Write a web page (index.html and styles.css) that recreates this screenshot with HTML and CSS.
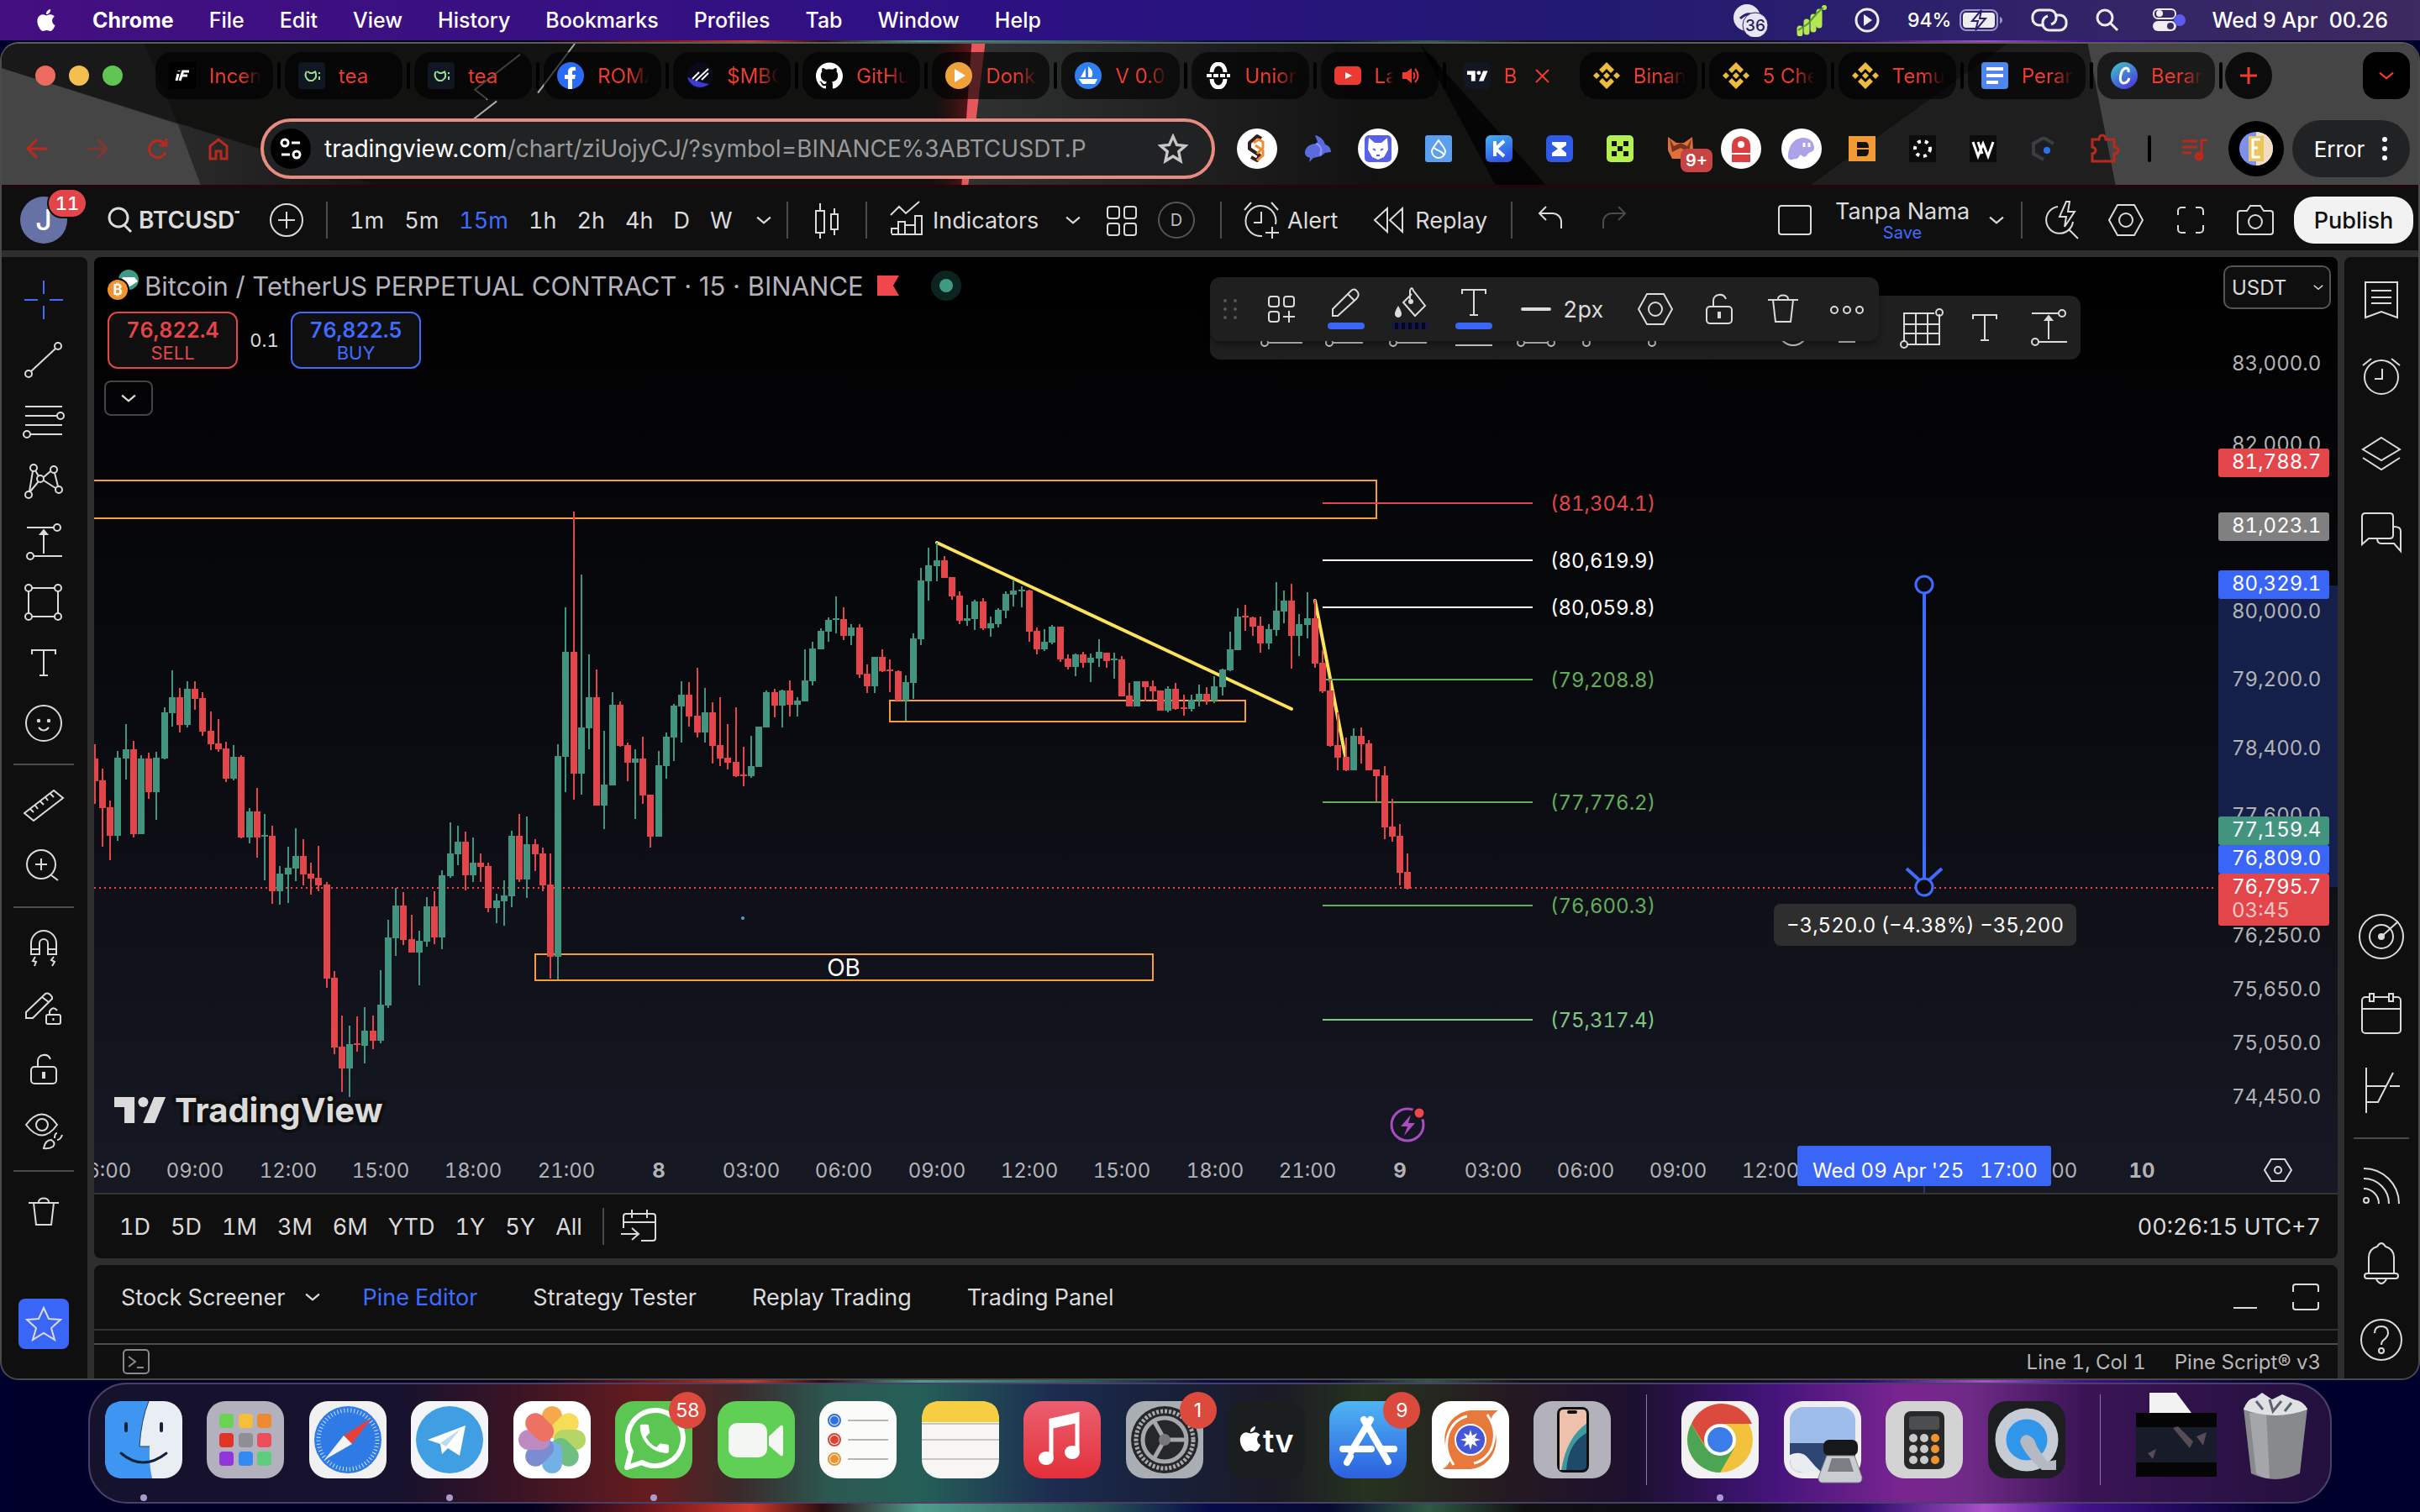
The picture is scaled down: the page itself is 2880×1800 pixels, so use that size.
FILE: index.html
```html
<!DOCTYPE html>
<html lang="en">
<head>
  <meta charset="utf-8">
  <title>BTCUSDT.P 15m - TradingView</title>
  <link rel="stylesheet" href="styles.css">
</head>
<body>

<svg class="sprite" aria-hidden="true">
  <symbol id="apple" viewBox="0 0 24 24"><path fill="currentColor" d="M12.152 6.896c-.948 0-2.415-1.078-3.96-1.04-2.04.027-3.91 1.183-4.961 3.014-2.117 3.675-.546 9.103 1.519 12.09 1.013 1.454 2.208 3.09 3.792 3.039 1.52-.065 2.09-.987 3.935-.987 1.831 0 2.35.987 3.96.948 1.637-.026 2.676-1.48 3.676-2.948 1.156-1.688 1.636-3.325 1.662-3.415-.039-.013-3.182-1.221-3.22-4.857-.026-3.04 2.48-4.494 2.597-4.559-1.429-2.09-3.623-2.324-4.39-2.376-2-.156-3.675 1.09-4.61 1.09zM15.53 3.83c.843-1.012 1.4-2.427 1.245-3.83-1.207.052-2.662.805-3.532 1.818-.78.896-1.454 2.338-1.273 3.714 1.338.104 2.715-.688 3.559-1.701"/></symbol>
  <symbol id="chev" viewBox="0 0 16 16"><path fill="none" stroke="currentColor" stroke-width="2" d="M1 5l7 6 7-6"/></symbol>
  <symbol id="binance" viewBox="0 0 32 32"><path fill="#edbc3f" d="M16 0l9 9-4 4-5-5-5 5-4-4zM16 32l9-9-4-4-5 5-5-5-4 4zM4 12l4 4-4 4-4-4zM28 12l4 4-4 4-4-4zM16 12l4 4-4 4-4-4z"/></symbol>
  <symbol id="tea" viewBox="0 0 32 32"><rect width="32" height="32" rx="4" fill="#101722"/><g fill="none" stroke="#9ade8e" stroke-width="2"><path d="M10 11c-3 4-1 9 3 11h4c5-3 5-7 3-11M11 11l3 2h3l4-2"/><path d="M25 12v2M25 17v4"/></g></symbol>
  <symbol id="hex" viewBox="0 0 28 28"><path d="M9 5h10l5 9-5 9H9l-5-9z"/><circle cx="14" cy="14" r="4"/></symbol>
  <symbol id="ttool" viewBox="0 0 28 28"><path d="M7 9V6.500h14V9M14 6.500v15M11.500 21.500h5"/></symbol>
  <symbol id="trash" viewBox="0 0 28 28"><path d="M5 8.500h18M8 8.500l1.500 13h9l1.500-13M11 8c0-3 6-3 6 0"/></symbol>
  <symbol id="unlock" viewBox="0 0 28 28"><rect x="6.500" y="12.500" width="15" height="10" rx="2"/><path d="M10.500 12V9c0-4 6-5 7.500-1"/><rect x="13.500" y="16" width="1" height="3"/></symbol>
  <symbol id="fib" viewBox="0 0 28 28"><path d="M3 5.500h22M3 11h19M3 16.500h22M6 22h19"/><circle cx="24" cy="11" r="2"/><circle cx="4" cy="22" r="2"/></symbol>
  <symbol id="longpos" viewBox="0 0 28 28"><path d="M4 5.500h16M8 22.500h17M14 21V9"/><path d="M12 9.500l2-2.500 2 2.500z" fill="currentColor"/><circle cx="22" cy="5.500" r="2"/><circle cx="6" cy="22.500" r="2"/></symbol>
  <symbol id="full" viewBox="0 0 28 28"><path d="M6.500 11V8.500a2 2 0 0 1 2-2H11M17 6.500h2.500a2 2 0 0 1 2 2V11M21.500 17v2.500a2 2 0 0 1-2 2H17M11 21.500H8.500a2 2 0 0 1-2-2V17"/></symbol>
  <symbol id="alarm" viewBox="0 0 28 28"><circle cx="14" cy="14" r="10"/><path d="M14.500 9v6H10M3 7l5-4M25 7l-5-4"/></symbol>
  <symbol id="tvmark" viewBox="0 0 36 18"><path fill="currentColor" d="M0 0h14v18H7V7H0zM28 18h-8l7.500-18h8z"/><circle cx="20" cy="3.500" r="3.500" fill="currentColor"/></symbol>
</svg>

<header class="menubar">
  <nav class="menus">
    <svg class="apple"><use href="#apple"/></svg>
    <b>Chrome</b><span>File</span><span>Edit</span><span>View</span><span>History</span><span>Bookmarks</span><span>Profiles</span><span>Tab</span><span>Window</span><span>Help</span>
  </nav>
  <div class="status">
    <svg width="42" height="40" viewBox="0 0 42 40"><circle cx="16" cy="17" r="16" fill="#e8e6f2"/><path d="M8 18q8-8 16-4" stroke="#2a2070" stroke-width="3" fill="none"/><circle cx="26" cy="26" r="15" fill="#e8e6f2" stroke="#2a2070"/><text x="26" y="33" font-size="19" text-anchor="middle" fill="#241c60">36</text></svg>
    <svg class="gap-l" width="36" height="38" viewBox="0 0 36 38"><path d="M4 35v-6M12 33V21M20 30V15M27 25V9" stroke="#b5e853" stroke-width="7" stroke-linecap="round"/><circle cx="33" cy="4" r="3" fill="#b5e853"/><path d="M2 31l12-8 10-12 8-7" stroke="#4f9a31" stroke-width="2" fill="none"/></svg>
    <svg class="gap-l" width="30" height="30" viewBox="0 0 30 30"><circle cx="15" cy="15" r="13" fill="none" stroke="#eee" stroke-width="3"/><path d="M11 8l10 7-10 7z" fill="#eee"/></svg>
    <span class="battery gap-l">94%</span>
    <svg class="gap-s" width="52" height="26" viewBox="0 0 52 26"><rect x="1" y="1" width="44" height="24" rx="7" fill="none" stroke="#9d95cf" stroke-width="2"/><rect x="4" y="4" width="38" height="18" rx="4" fill="#eee"/><path d="M48 9v8q3-1 3-4t-3-4z" fill="#9d95cf"/><path d="M26 1l-11 13h7l-3 11 12-14h-7z" fill="#eee" stroke="#2a2070" stroke-width="2"/></svg>
    <svg class="gap-l" width="44" height="28" viewBox="0 0 44 28" fill="none" stroke="#eee" stroke-width="3"><path d="M16 20h-6a8 8 0 0 1-8-9 8 8 0 0 1 8-9h12a8 8 0 0 1 8 9q0 6-6 8"/><path d="M28 8h6a8 8 0 0 1 8 9 8 8 0 0 1-8 9H22a8 8 0 0 1-8-9q0-6 6-8"/></svg>
    <svg class="gap-l" width="28" height="28" viewBox="0 0 28 28" fill="none" stroke="#eee" stroke-width="3"><circle cx="11" cy="11" r="9"/><path d="M18 18l8 8"/></svg>
    <svg class="gap-xl" width="40" height="28" viewBox="0 0 40 28"><rect x="1" y="1" width="26" height="11" rx="5" fill="none" stroke="#eee" stroke-width="2"/><circle cx="8" cy="6" r="4" fill="#eee"/><rect x="0" y="15" width="28" height="12" rx="6" fill="#eee"/><circle cx="21" cy="21" r="4" fill="#332a68"/><circle cx="32" cy="14" r="7" fill="#5b5bf0"/></svg>
    <span class="clock">Wed 9 Apr&nbsp; 00.26</span>
  </div>
</header>

<main class="browser">
  <div class="chrome">
    <svg class="theme" viewBox="0 0 2880 172" preserveAspectRatio="none" aria-hidden="true">
      <defs>
        <linearGradient id="gMid"><stop offset="0" stop-color="#303131"/><stop offset="1" stop-color="#111"/></linearGradient>
        <linearGradient id="gRed"><stop offset="0" stop-color="#5a0d10" stop-opacity="0"/><stop offset="1" stop-color="#8c1a1e" stop-opacity="0.800"/></linearGradient>
        <linearGradient id="gFade"><stop offset="0" stop-color="#3c3c3c"/><stop offset="1" stop-color="#161616"/></linearGradient>
      </defs>
      <rect width="2880" height="172" fill="#121211"/>
      <path d="M0 0h170l40 98L0 30z" fill="#191919"/>
      <path d="M0 30l446 142H0z" fill="url(#gFade)"/>
      <path d="M0 30l210 68 27 74H0z" fill="#454545"/>
      <path d="M1165 0h420l60 172h-494z" fill="url(#gMid)"/>
      <path d="M1112 0h53l-14 172h-40z" fill="url(#gRed)"/>
      <path d="M1156 0h16l-20 172h-8z" fill="#e4585c"/>
      <path d="M1690 0l150 172h-60z" fill="#050505"/>
      <path d="M2390 0h96l33 172h-363z" fill="#1e1e1e"/>
      <path d="M2486 0h394v172h-361z" fill="#454545"/>
      <path d="M683 0l-44 60M618 13l-54 43 15 12M590 70l-30 24" stroke="#aaa" stroke-width="2" fill="none"/>
    </svg>

    <div class="tabstrip">
      <div class="lights"><i class="red"></i><i class="amber"></i><i class="green"></i></div>
      <div class="tabs">
        <a class="tab" href="#"><svg class="fav" viewBox="0 0 32 32"><rect width="32" height="32" fill="#000"/><path d="M16 11h8M14 16h8M17 10l-4 12M11 14l-2 8M12 10v1" stroke="#fff" stroke-width="3" fill="none"/></svg><span>Incen</span></a>
        <a class="tab" href="#"><svg class="fav"><use href="#tea"/></svg><span>tea</span></a>
        <a class="tab" href="#"><svg class="fav"><use href="#tea"/></svg><span>tea</span></a>
        <a class="tab" href="#"><svg class="fav" viewBox="0 0 32 32"><circle cx="16" cy="16" r="16" fill="#2a6cf6"/><path d="M13 32V20H9v-5h4v-3c0-5 3-7 9-6v4c-3 0-4 0-4 2v3h4l-1 5h-3v12z" fill="#fff"/></svg><span>ROMA</span></a>
        <a class="tab" href="#"><svg class="fav" viewBox="0 0 32 32"><circle cx="16" cy="16" r="16" fill="#0a0a18"/><path d="M1 18c5 2 14 6 26 8A16 16 0 0 1 1 18z" fill="#3b3bd8"/><path d="M7 20l8-8M11 22L26 8M18 21l8-8" stroke="#fff" stroke-width="2"/></svg><span>$MBG</span></a>
        <a class="tab" href="#"><svg class="fav" viewBox="0 0 24 24"><path fill="#fff" d="M12 .297c-6.630 0-12 5.373-12 12 0 5.303 3.438 9.800 8.205 11.385.6.113.820-.258.820-.577 0-.285-.010-1.040-.015-2.040-3.338.724-4.042-1.610-4.042-1.610C4.422 18.070 3.633 17.700 3.633 17.700c-1.087-.744.084-.729.084-.729 1.205.084 1.838 1.236 1.838 1.236 1.070 1.835 2.809 1.305 3.495.998.108-.776.417-1.305.760-1.605-2.665-.3-5.466-1.332-5.466-5.930 0-1.310.465-2.380 1.235-3.220-.135-.303-.540-1.523.105-3.176 0 0 1.005-.322 3.300 1.230.960-.267 1.980-.399 3-.405 1.020.006 2.040.138 3 .405 2.280-1.552 3.285-1.230 3.285-1.230.645 1.653.240 2.873.120 3.176.765.840 1.230 1.910 1.230 3.220 0 4.610-2.805 5.625-5.475 5.920.420.360.810 1.096.810 2.220 0 1.606-.015 2.896-.015 3.286 0 .315.210.690.825.570C20.565 22.092 24 17.592 24 12.297c0-6.627-5.373-12-12-12"/></svg><span>GitHub</span></a>
        <a class="tab" href="#"><svg class="fav" viewBox="0 0 32 32"><circle cx="16" cy="16" r="16" fill="#f0a23a"/><path d="M11 8l13 8-13 8z" fill="#fff"/></svg><span>Donk</span></a>
        <a class="tab" href="#"><svg class="fav" viewBox="0 0 32 32"><circle cx="16" cy="16" r="16" fill="#2f7ff0"/><path d="M13 7v11H7zM16 5q8 6 4 13h-4zM5 20h22l-3 6H9z" fill="#fff"/></svg><span>V 0.0</span></a>
        <a class="tab" href="#"><svg class="fav" viewBox="0 0 32 32"><path d="M8 12a8 10 0 0 1 16 0M8 20a8 10 0 0 0 16 0" stroke="#fff" stroke-width="5" fill="none"/><path d="M2 16h28" stroke="#fff" stroke-width="4" stroke-dasharray="6 2"/></svg><span>Union</span></a>
        <a class="tab" href="#"><svg class="fav" viewBox="0 0 32 32"><rect y="5" width="32" height="22" rx="5" fill="#ec3a32"/><path d="M13 12l8 4-8 4z" fill="#fff"/></svg><span class="short">La</span><svg class="mark" viewBox="0 0 24 24" fill="none" stroke="currentColor" stroke-width="2"><path d="M2 9h4l5-4v14l-5-4H2z" fill="currentColor"/><path d="M14 8q3 4 0 8M16 4q7 8 0 16"/></svg></a>
        <a class="tab active" href="#"><svg class="fav" viewBox="0 0 32 32"><rect width="32" height="32" rx="5" fill="#131722"/><svg x="4" y="10" width="25" height="13" viewBox="0 0 36 18" color="#fff"><use href="#tvmark"/></svg></svg><span class="short">B</span><svg class="mark" viewBox="0 0 24 24" stroke="currentColor" stroke-width="2"><path d="M4 5l15 15M19 5L4 20"/></svg></a>
        <a class="tab" href="#"><svg class="fav"><use href="#binance"/></svg><span>Binan</span></a>
        <a class="tab" href="#"><svg class="fav"><use href="#binance"/></svg><span>5 Che</span></a>
        <a class="tab" href="#"><svg class="fav"><use href="#binance"/></svg><span>Temu</span></a>
        <a class="tab" href="#"><svg class="fav" viewBox="0 0 32 32"><rect width="32" height="32" rx="4" fill="#4f86ec"/><path d="M6 8h20M6 16h20M6 24h14" stroke="#fff" stroke-width="4"/></svg><span>Peran</span></a>
        <a class="tab" href="#"><svg class="fav" viewBox="0 0 32 32"><defs><linearGradient id="cv" x2="0.600" y2="1"><stop stop-color="#3ecbc3"/><stop offset="1" stop-color="#4a3fe0"/></linearGradient></defs><circle cx="16" cy="16" r="16" fill="url(#cv)"/><path d="M21 12q1-5-3-5c-6 1-10 17-3 18q5 0 7-6" stroke="#fff" stroke-width="3" fill="none"/></svg><span>Beran</span></a>
      </div>
      <button class="newtab" aria-label="New tab"><svg width="24" height="24" viewBox="0 0 24 24" stroke="currentColor" stroke-width="3"><path d="M12 2v20M2 12h20"/></svg></button>
      <button class="tabsearch" aria-label="Search tabs"><svg width="18" height="18"><use href="#chev"/></svg></button>
    </div>

    <div class="navbar">
      <div class="navbtns">
        <svg viewBox="0 0 28 28"><path d="M26 14H4M14 3L3 14l11 11"/></svg>
        <svg viewBox="0 0 28 28" class="dim"><path d="M2 14h22M14 3l11 11-11 11"/></svg>
        <svg viewBox="0 0 28 28"><path d="M23 18a10 10 0 1 1-1-9M24 2v8h-8"/></svg>
        <svg viewBox="0 0 28 28"><path d="M4 26V11l10-8 10 8v15h-7v-9h-6v9z"/></svg>
      </div>
      <div class="omnibox">
        <svg class="tune" viewBox="0 0 48 48"><circle cx="24" cy="24" r="24" fill="#000"/><g stroke="#fff" stroke-width="3" fill="none"><circle cx="17" cy="17" r="4"/><path d="M25 17h10M13 31h10"/><circle cx="31" cy="31" r="4"/></g></svg>
        <p class="url"><b>tradingview.com</b>/chart/ziUojyCJ/?symbol=BINANCE%3ABTCUSDT.P</p>
        <svg class="star" viewBox="0 0 32 32"><path d="M16 3l4 9 9 1-7 6 2 10-8-5-8 5 2-10-7-6 9-1z" fill="none" stroke="#c7c7c7" stroke-width="3"/></svg>
      </div>
      <div class="exts">
        <svg viewBox="0 0 48 48"><circle cx="24" cy="24" r="24" fill="#fff"/><path d="M29 12l-5-3-9 8v7l12 8-3 6-7-4" stroke="#33201c" stroke-width="4" fill="none" stroke-linejoin="round"/><path d="M20 17l6-4 5 3v7l-7 7M22 20l9 6v6l-7 6" stroke="#ef8c32" stroke-width="3" fill="none" stroke-linejoin="round"/></svg>
        <svg viewBox="0 0 48 48"><path d="M9 29c0-6 5-11 13-11l2-2-3-8c6 1 11 6 12 11 4 1 7 4 7 9l-7 1-5 4-9 2-5 5 1-5c-4-1-6-3-6-6z" fill="#5c6bdc"/><path d="M22 18c6 2 8 8 5 14" stroke="#8b97f5" stroke-width="2" fill="none"/></svg>
        <svg viewBox="0 0 48 48"><circle cx="24" cy="24" r="24" fill="#fff"/><rect x="8" y="8" width="32" height="32" rx="5" fill="#5a5fe8"/><path d="M13 11l7 6h8l7-6 1 14-5 9-7 3-7-3-5-9z" fill="#fff"/><path d="M18 24l3 2M30 24l-3 2M22 32h4" stroke="#5a5fe8" stroke-width="2"/></svg>
        <svg viewBox="0 0 48 48"><rect x="8" y="8" width="32" height="32" rx="3" fill="#5aa0ee"/><path d="M24 14c5 7 8 10 8 13a8 8 0 0 1-16 0c0-3 3-6 8-13zM19 23c3 4 9 3 11 8" fill="none" stroke="#fff" stroke-width="2"/></svg>
        <svg viewBox="0 0 48 48"><defs><linearGradient id="kp" x2="0.400" y2="1"><stop stop-color="#44b3f0"/><stop offset="1" stop-color="#2f57e8"/></linearGradient></defs><rect x="8" y="8" width="32" height="32" rx="6" fill="url(#kp)"/><path d="M19 15v18M30 15l-10 9 10 9" stroke="#fff" stroke-width="4" fill="none"/></svg>
        <svg viewBox="0 0 48 48"><rect x="8" y="8" width="32" height="32" rx="6" fill="#2d5be6"/><path d="M15 16h17v4l-6 4 6 5v4H15v-4l7-5-7-5z" fill="#fff"/></svg>
        <svg viewBox="0 0 48 48"><rect x="8" y="8" width="32" height="32" rx="5" fill="#b4f04e"/><path d="M14 15h6v6h-6zM28 15h6v6h-6zM21 21h6v6h-6zM14 27h6v6h-6zM28 27h6v6h-6z" fill="#111"/></svg>
        <span class="badged"><svg viewBox="0 0 48 48"><path d="M9 10l10 7h9l10-7 1 16-6 10H14L9 26z" fill="#e0703a"/><path d="M11 12l5 9 8-4 8 4 5-9-3 16-10-5-10 5z" fill="#7a3320"/></svg><i>9+</i></span>
        <svg viewBox="0 0 48 48"><circle cx="24" cy="24" r="24" fill="#fff"/><path d="M13 40V20q0-9 11-11 11 2 11 11v20z" fill="#dc3f42"/><circle cx="24" cy="19" r="4" fill="#fff"/><path d="M12 30h24" stroke="#fff" stroke-width="2"/></svg>
        <svg viewBox="0 0 48 48"><circle cx="24" cy="24" r="24" fill="#fff"/><path d="M8 34c0-14 8-23 18-23 8 0 13 5 13 12 0 6-6 4-8 8-3 5-6 2-8 0-3 3-3 6-8 5-2 2-7 2-7-2z" fill="#aba2e8"/><path d="M27 17v5M33 17v5" stroke="#fff" stroke-width="3"/></svg>
        <svg viewBox="0 0 48 48"><rect x="8" y="9" width="32" height="30" fill="#f29a33"/><path d="M18 16h10q4 0 4 7H18zM18 25h14q0 8-4 8H18z" fill="#111"/></svg>
        <svg viewBox="0 0 48 48"><rect x="8" y="8" width="32" height="32" fill="#0b0b0b"/><circle cx="24" cy="24" r="9" fill="none" stroke="#fff" stroke-width="4" stroke-dasharray="4 5"/></svg>
        <svg viewBox="0 0 48 48"><rect x="8" y="8" width="32" height="32" fill="#0b0b0b"/><path d="M12 16l6 17 6-15 6 15 6-17M18 16l5 14" fill="none" stroke="#fff" stroke-width="3"/></svg>
        <svg viewBox="0 0 48 48"><path d="M24 11l-12 7v12l12 7M24 11l12 7" fill="none" stroke="#3a3e44" stroke-width="4"/><circle cx="28" cy="26" r="4" fill="#2a72f0"/></svg>
        <svg viewBox="0 0 48 48"><path d="M10 13h8q0-5 4-5t4 5h10v9q5 0 5 4t-5 4v9H10v-9q4-1 4-4t-4-4z" fill="none" stroke="#b92a1e" stroke-width="3"/></svg>
      </div>
      <i class="navsep"></i>
      <svg class="music" viewBox="0 0 32 32" fill="none" stroke="#b92a1e" stroke-width="3"><path d="M1 7h18M1 14h18M1 21h11M24 25V6h7"/><circle cx="21" cy="25" r="4" fill="#b92a1e"/></svg>
      <svg class="profile" viewBox="0 0 66 66"><circle cx="33" cy="33" r="33" fill="#000"/><circle cx="33" cy="33" r="20" fill="#7d90ec"/><path d="M33 13a20 20 0 0 1 0 40z" fill="#f4dcc0"/><path d="M24 18h18v30H24z" fill="#e9c65e"/><path d="M38 22h-9v21h9M29 32h6" fill="none" stroke="#fff" stroke-width="3"/></svg>
      <button class="error">Error<svg width="8" height="32" viewBox="0 0 8 32"><g fill="#fff"><circle cx="4" cy="5" r="3"/><circle cx="4" cy="16" r="3"/><circle cx="4" cy="27" r="3"/></g></svg></button>
    </div>
  </div>

  <div class="tv">
    <div class="topbar">
      <div class="group symbol">
        <span class="avatar">J<i>11</i></span>
        <svg class="glass" width="32" height="32" viewBox="0 0 32 32" fill="none" stroke="currentColor" stroke-width="3"><circle cx="14" cy="13" r="11"/><path d="M21 22l8 8"/></svg>
        <b>BTCUSDT.P</b>
        <svg class="ic" viewBox="0 0 28 28"><circle cx="14" cy="14" r="9.500"/><path d="M14 9v10M9 14h10"/></svg>
      </div>
      <div class="group intervals">
        <button>1m</button><button>5m</button><button class="on">15m</button><button>1h</button><button>2h</button><button>4h</button><button>D</button><button>W</button>
        <svg class="chev"><use href="#chev"/></svg>
      </div>
      <div class="group style">
        <svg class="ic" viewBox="0 0 28 28"><path d="M7.500 8.500h5v13h-5zM10 4v4M10 22v3M16.500 10.500h4v9h-4zM18.500 7v3M18.500 20v3"/></svg>
      </div>
      <div class="group indi">
        <svg class="ic" viewBox="0 0 28 28"><path d="M5.500 22.500h18v-11h-4v11M9.500 22v-7h4v7M5.500 22v-3h4M13.500 17h6M5 11l5-5 4 4 8-7"/></svg>
        <button class="label">Indicators</button>
        <svg class="chev"><use href="#chev"/></svg>
        <svg class="ic" viewBox="0 0 28 28"><rect x="6" y="6" width="7" height="7" rx="1.500"/><rect x="16" y="6" width="7" height="7" rx="1.500"/><rect x="6" y="16" width="7" height="7" rx="1.500"/><rect x="16" y="16" width="7" height="7" rx="1.500"/></svg>
        <span class="dcircle">D</span>
      </div>
      <div class="group alert">
        <svg class="ic" viewBox="0 0 28 28"><path d="M15 23.500a9 9 0 1 1 8-7M14.500 9v6.500H10M4.500 8l4-4.500M24.500 8l-4-4.500M21 18v7M17 21.500h8"/></svg>
        <button class="label">Alert</button>
        <svg class="ic replay" viewBox="0 0 28 28"><path d="M13.500 7v14L6 14zM22.500 7v14L15 14z"/></svg>
        <button class="label">Replay</button>
      </div>
      <div class="group undo">
        <svg class="ic" viewBox="0 0 28 28"><path d="M11 6l-4 4 4 4M7.500 10H15a5 5 0 0 1 5 5v4"/></svg>
        <svg class="ic off" viewBox="0 0 28 28"><path d="M17 6l4 4-4 4M20.500 10H13a5 5 0 0 0-5 5v4"/></svg>
      </div>
      <div class="group layout">
        <svg class="ic" viewBox="0 0 28 28"><rect x="4.500" y="5.500" width="19" height="17" rx="1.500"/></svg>
        <p class="name">Tanpa Nama<a href="#">Save</a></p>
        <svg class="chev"><use href="#chev"/></svg>
      </div>
      <div class="group right">
        <svg class="ic" viewBox="0 0 28 28"><path d="M12 6a8 8 0 1 0 9 9M19 20l5 5M17 3l-4 9h4l-1 6 6-9h-4l1-6z"/></svg>
        <svg class="ic"><use href="#hex"/></svg>
        <svg class="ic"><use href="#full"/></svg>
        <svg class="ic" viewBox="0 0 28 28"><path d="M5 8.500h4l2-3h6l2 3h4q1.500 0 1.500 1.500v11q0 1.500-1.500 1.500H5q-1.500 0-1.500-1.500V10q0-1.500 1.500-1.500z"/><circle cx="14" cy="15" r="4"/></svg>
        <button class="publish">Publish</button>
      </div>
    </div>

    <div class="work">
      <aside class="tools">
        <svg class="ic blue" viewBox="0 0 28 28"><path d="M14 2.500v8M14 17.500v8M2.500 14h8M17.500 14h8"/></svg>
        <svg class="ic" viewBox="0 0 28 28"><circle cx="5" cy="22" r="2"/><circle cx="22.500" cy="5.500" r="2"/><path d="M6.500 20.500L21 7"/></svg>
        <svg class="ic"><use href="#fib"/></svg>
        <svg class="ic" viewBox="0 0 28 28"><circle cx="8" cy="6" r="2"/><circle cx="20" cy="7" r="2"/><circle cx="12" cy="12.500" r="2"/><circle cx="5" cy="22" r="2"/><circle cx="23" cy="19" r="2"/><path d="M7.500 8L5.500 20M9 7.500l2 3.500M14 11.500L18 8M6 20l5-6M14 13.500l7 4.500M20.500 9l2 8"/></svg>
        <svg class="ic"><use href="#longpos"/></svg>
        <svg class="ic" viewBox="0 0 28 28"><circle cx="5" cy="5.500" r="2"/><circle cx="22.500" cy="5.500" r="2"/><circle cx="5" cy="22.500" r="2"/><circle cx="22.500" cy="22.500" r="2"/><path d="M7 5.500h13.500M7 22.500h13.500M5 7.500v13M22.500 7.500v13"/></svg>
        <svg class="ic"><use href="#ttool"/></svg>
        <svg class="ic" viewBox="0 0 28 28"><circle cx="14" cy="14" r="10.500"/><path d="M11 16.500q3 3.500 6 0"/><circle cx="11" cy="12.500" r="0.600"/><circle cx="17" cy="12.500" r="0.600"/></svg>
        <hr>
        <svg class="ic" viewBox="0 0 28 28"><path d="M2.500 18.500L20 5l5.500 4.500L8 23zM6 16l2 2M9 14l1.500 2M12 11.500l2 2M15 9l1.500 2M18 7l2 2"/></svg>
        <svg class="ic" viewBox="0 0 28 28"><circle cx="12.500" cy="13" r="8.500"/><path d="M12.500 9.500v7M9 13h7M18.500 19.500l4 3"/></svg>
        <hr>
        <svg class="ic" viewBox="0 0 28 28"><path d="M6.500 17.500V11a7.500 7.500 0 0 1 15 0v6.500h-5V11a2.500 2.500 0 0 0-5 0v6.500zM6.500 14.500h5M16.500 14.500h5M9 19l-1.500 2.500 2 .500-1 2.500M20 19l-1.500 2 2 1-1.500 2.500"/></svg>
        <svg class="ic" viewBox="0 0 28 28"><path d="M3.500 19.500V16L15 5q2-1 4 2v1L7.500 19.500zM13 7l4 3"/><rect x="15.500" y="17.500" width="8.500" height="5.500" rx="1"/><path d="M17.500 17v-1.500q2-3.500 4.500-.5M19.700 19.500v1.500"/></svg>
        <svg class="ic"><use href="#unlock"/></svg>
        <svg class="ic" viewBox="0 0 28 28"><path d="M3.500 11q9.500-12.500 18.500 0-9 12.500-18.500 0z"/><circle cx="13" cy="11" r="3.500"/><path d="M14 25q1-5 4.500-5 3 2 1 4-2 1.500-5.500 1zM20.500 19q0-3 1.500-3M22 20q2 0 3-3"/></svg>
        <hr>
        <svg class="ic"><use href="#trash"/></svg>
        <button class="fave" aria-label="Favorites"><svg class="ic" viewBox="0 0 28 28"><path d="M14 4.500l3 6.500 7 .500-5.500 5 2 7-6.500-4-6.500 4 2-7L4 11.500l7-.500z"/></svg></button>
      </aside>

      <div class="center">
        <section class="chart">
          <div class="plot">
            <svg class="canvas" viewBox="112 306 2670 1114">
              <g id="shapes">
                <rect class="band" x="2640" y="697" width="142" height="359"/>
                <path class="zone" d="M100 572H1638V617H100z"/>
                <path class="zone" d="M1059 834H1482V859H1059z"/>
                <path class="zone" d="M637 1136H1372V1167H637z"/>
                <text class="ob" x="1004" y="1162">OB</text>
                <circle cx="884" cy="1093" r="2" fill="#4fa3c7"/>
                <path class="trend" d="M1115 646L1537 844M1565 715L1601 900"/>
              </g>
              <g id="levels"></g>
              <path class="last" d="M112 1057H2634"/>
              <g id="candles"></g>
              <g class="measure">
                <path d="M2290 706V1046M2269 1034l21 19 21-19"/>
                <circle cx="2290" cy="696" r="10"/><circle cx="2290" cy="1056" r="10"/>
              </g>
              <g class="tip"><rect x="2111" y="1076" width="360" height="50" rx="8"/><text x="2291" y="1110">−3,520.0 (−4.38%) −35,200</text></g>
              <g class="event"><circle cx="1675" cy="1339" r="19"/><path d="M1679 1327l-12 14h8l-4 11 13-15h-8z"/></g>
              <circle cx="1689" cy="1325" r="7" fill="#f0464c" stroke="#14161f" stroke-width="3"/>
              <g class="brand"><svg x="136" y="1306" width="62" height="31" viewBox="0 0 36 18"><use href="#tvmark"/></svg><text x="208" y="1336">TradingView</text></g>
              <g id="axes"></g>
              <path d="M2290 1412v8" stroke="#26356e" stroke-width="2"/>
              <g class="axisicon"><path d="M2703 1380h16l8 13-8 13h-16l-8-13z"/><circle cx="2711" cy="1393" r="4"/></g>
            </svg>
            <div class="legend">
              <h1><svg width="38" height="38" viewBox="0 0 38 38"><circle cx="25" cy="12" r="12" fill="#3f9a86"/><path d="M18 9h14l4 5-11 7-9-8z" fill="#fff"/><circle cx="12" cy="24" r="14" fill="#000"/><circle cx="12" cy="24" r="12" fill="#f0932f"/><text x="12" y="30" font-size="17" font-weight="700" text-anchor="middle" fill="#fff">₿</text></svg><span>Bitcoin / TetherUS PERPETUAL CONTRACT · 15 · BINANCE</span><svg class="flag" width="26" height="24" viewBox="0 0 26 24"><path d="M0 0h26l-7 12 7 12H0z" fill="#f0464c"/></svg><svg width="36" height="36" viewBox="0 0 36 36"><circle cx="18" cy="18" r="18" fill="#0b2420"/><circle cx="18" cy="18" r="8" fill="#3f9a84"/></svg></h1>
              <div class="trade">
                <button class="sell"><b>76,822.4</b>SELL</button>
                <span>0.1</span>
                <button class="buy"><b>76,822.5</b>BUY</button>
              </div>
              <button class="fold" aria-label="Collapse"><svg width="18" height="18"><use href="#chev"/></svg></button>
            </div>
            <label class="currency"><select aria-label="Currency"><option>USDT</option></select><svg width="12" height="12"><use href="#chev"/></svg></label>

            <div class="floating back">
              <svg class="ic" viewBox="0 0 28 28"><path d="M6 23h20"/><circle cx="3.500" cy="23" r="2"/></svg>
              <svg class="ic" viewBox="0 0 28 28"><path d="M6 23h18"/><circle cx="4" cy="23" r="2"/></svg>
              <svg class="ic" viewBox="0 0 28 28"><path d="M6 23h18"/><circle cx="4" cy="23" r="2"/></svg>
              <svg class="ic" viewBox="0 0 28 28"><path d="M3 24.500h22"/></svg>
              <svg class="ic" viewBox="0 0 28 28"><path d="M6 23h14"/><circle cx="4" cy="23" r="2"/><circle cx="22" cy="23" r="2"/></svg>
              <svg class="ic" viewBox="0 0 28 28"><circle cx="5" cy="23" r="2"/></svg>
              <svg class="ic" viewBox="0 0 28 28"><circle cx="6" cy="23" r="2"/></svg>
              <i></i>
              <svg class="ic" viewBox="0 0 28 28"><circle cx="14" cy="16" r="8.500"/></svg>
              <svg class="ic" viewBox="0 0 28 28"><path d="M3 22.500h10"/></svg>
              <svg class="ic" viewBox="0 0 28 28"><path d="M4 5.500h18M4 12h21M4 17.500h21M6 24h19V6M4 5v17M11 5v19M18 5v19"/><circle cx="25" cy="5" r="2"/><circle cx="4" cy="24" r="2"/></svg>
              <svg class="ic"><use href="#ttool"/></svg>
              <svg class="ic"><use href="#longpos"/></svg>
            </div>
            <div class="floating front">
              <svg class="grip" width="16" height="28" viewBox="0 0 16 28" fill="#555"><circle cx="2" cy="4" r="2"/><circle cx="14" cy="4" r="2"/><circle cx="2" cy="14" r="2"/><circle cx="14" cy="14" r="2"/><circle cx="2" cy="24" r="2"/><circle cx="14" cy="24" r="2"/></svg>
              <svg class="ic" viewBox="0 0 28 28"><rect x="6" y="6.500" width="6" height="6" rx="1.500"/><rect x="15" y="6.500" width="6" height="6" rx="1.500"/><rect x="6" y="15.500" width="6" height="6" rx="1.500"/><path d="M18 15v7M14.500 18.500h7"/></svg>
              <span class="paint"><svg class="ic" viewBox="0 0 28 28"><path d="M6 22v-4L17 7q2-2 4 1 1 2-1 4L9 22zM15 9l4 4"/></svg><i></i></span>
              <span class="paint none"><svg class="ic" viewBox="0 0 28 28"><path d="M14 12V7q1-3 2 0l7 9-6 6-7-8 5-5"/><circle cx="14.500" cy="13.500" r="1" fill="currentColor"/><path d="M7 17q3 5 0 5.500-3-.500 0-5.500z" fill="currentColor"/></svg><i></i></span>
              <span class="paint"><svg class="ic"><use href="#ttool"/></svg><i></i></span>
              <span class="px"><i></i>2px</span>
              <svg class="ic"><use href="#hex"/></svg>
              <svg class="ic"><use href="#unlock"/></svg>
              <svg class="ic"><use href="#trash"/></svg>
              <svg class="ic" viewBox="0 0 28 28"><circle cx="6.500" cy="14.500" r="2"/><circle cx="14" cy="14.500" r="2"/><circle cx="21.500" cy="14.500" r="2"/></svg>
            </div>
          </div>
          <div class="ranges">
            <button>1D</button><button>5D</button><button>1M</button><button>3M</button><button>6M</button><button>YTD</button><button>1Y</button><button>5Y</button><button>All</button>
            <i class="sep"></i>
            <svg class="ic" viewBox="0 0 28 28"><path d="M4.500 15V8q0-1.500 1.500-1.500h16q1.500 0 1.500 1.500v13q0 1.500-1.500 1.500h-7M4.500 11.500h19M9.500 4v5M18.500 4v5M3 18.500h10M9.500 15l4 3.500-4 3.500"/></svg>
            <span class="utc">00:26:15 UTC+7</span>
          </div>
        </section>

        <section class="panel">
          <nav>
            <a href="#">Stock Screener</a><svg class="chev"><use href="#chev"/></svg>
            <a href="#" class="on">Pine Editor</a><a href="#">Strategy Tester</a><a href="#">Replay Trading</a><a href="#">Trading Panel</a>
            <span class="winbtns"><svg class="ic" viewBox="0 0 28 28"><path d="M7 20.500h14"/></svg><svg class="ic" viewBox="0 0 28 28"><path d="M6.500 11V8q0-1.500 1.500-1.500h12q1.500 0 1.500 1.500v3M21.500 17v3q0 1.500-1.500 1.500H8q-1.500 0-1.500-1.500v-3"/></svg></span>
          </nav>
          <footer>
            <svg width="32" height="30" viewBox="0 0 32 30" fill="none" stroke="#8a8a8a" stroke-width="2"><rect x="1" y="1" width="30" height="28" rx="4"/><path d="M7 9l8 6-8 6M17 22h8"/></svg>
            <span>Line 1, Col 1</span><span>Pine Script® v3</span>
          </footer>
        </section>
      </div>

      <aside class="side">
        <svg class="ic" viewBox="0 0 28 28"><path d="M4.500 3.500h19v21L14 21l-9.500 3.500zM8 8.500h12M8 12.500h12M8 16h12"/></svg>
        <svg class="ic"><use href="#alarm"/></svg>
        <svg class="ic" viewBox="0 0 28 28"><path d="M14 4l11 7-11 6.500L3 11zM3 16l11 7 11-7"/></svg>
        <svg class="ic" viewBox="0 0 28 28"><path d="M2.500 21.500V5q0-2 2-2H19q2 0 2 2v11q0 2-2 2H6.500zM21.500 11q4 0 4 2.500v12l-4-4.500H14q-2.500 0-2.500-3"/></svg>
        <i class="fill"></i>
        <svg class="ic" viewBox="0 0 28 28"><circle cx="14" cy="14" r="13"/><circle cx="14" cy="14" r="7"/><circle cx="14" cy="14" r="1.500" fill="currentColor"/><path d="M14 14l10-9"/></svg>
        <svg class="ic" viewBox="0 0 28 28"><rect x="2.500" y="4" width="23" height="21.500" rx="2"/><path d="M3 11h22M7 2h2.500v4.500H7zM18.500 2H21v4.500h-2.500z" fill="#0f0f0f"/></svg>
        <svg class="ic" viewBox="0 0 28 28"><path d="M5 0v27M5 11h12M19 11h6M5 20.500h7L21 3"/></svg>
        <hr>
        <svg class="ic" viewBox="0 0 28 28"><circle cx="5" cy="23" r="1.500"/><path d="M3.500 16a9 9 0 0 1 9 9M3.500 10a15 15 0 0 1 15 15M3.500 4a21 21 0 0 1 21 21"/></svg>
        <svg class="ic" viewBox="0 0 28 28"><path d="M6.500 20V11q0-5 5-6.500 2.500-4 5 0 5 1.500 5 6.500v9M5.500 20.500h17q1.500 0 1.500 1.500t-1.500 1.500h-17Q4 23.500 4 22t1.500-1.500zM11 24q3 5 6 0"/></svg>
        <svg class="ic" viewBox="0 0 28 28"><circle cx="14" cy="14" r="12"/><path d="M10 10q0-4 4-4t4 4q0 2-2.500 4-1.500 1-1.500 3"/><circle cx="14" cy="20.500" r="1.500"/></svg>
      </aside>
    </div>
  </div>
</main>

<footer class="dock">
  <span class="app run"><svg viewBox="0 0 92 92"><rect width="92" height="92" rx="22" fill="#e9eef4"/><path d="M22 0h30q-9 22-11 54h12q-1 20 3 38H22Q0 92 0 70V22Q0 0 22 0z" fill="#3f95f2"/><path d="M25 27v8M67 27v8" stroke="#12233a" stroke-width="4" stroke-linecap="round"/><path d="M19 62q26 22 54 0" stroke="#12233a" stroke-width="3" fill="none" stroke-linecap="round"/><path d="M52 0q-9 22-11 54h12" stroke="#20405f" stroke-width="1" fill="none"/></svg></span>
  <span class="app"><svg viewBox="0 0 92 92"><rect width="92" height="92" rx="22" fill="#b3b1bd"/><g><rect x="15" y="15" width="17" height="17" rx="4" fill="#6ad355"/><rect x="38" y="15" width="17" height="17" rx="4" fill="#f5bf3a"/><rect x="60" y="15" width="17" height="17" rx="4" fill="#ee8a31"/><rect x="15" y="38" width="17" height="17" rx="4" fill="#df3426"/><rect x="38" y="38" width="17" height="17" rx="4" fill="#8d8f94"/><rect x="60" y="38" width="17" height="17" rx="4" fill="#ec4f59"/><rect x="15" y="60" width="17" height="17" rx="4" fill="#9136d8"/><rect x="38" y="60" width="17" height="17" rx="4" fill="#338af2"/><rect x="60" y="60" width="17" height="17" rx="4" fill="#5fce7c"/></g></svg></span>
  <span class="app"><svg viewBox="0 0 92 92"><rect width="92" height="92" rx="22" fill="#f1f1f1"/><circle cx="46" cy="46" r="40" fill="#2f7be6"/><circle cx="46" cy="46" r="35" fill="none" stroke="#cfe2fb" stroke-width="5" stroke-dasharray="1 3"/><path d="M74 20L51 51 41 41z" fill="#e5403a"/><path d="M18 70l23-29 10 10z" fill="#f4f4f4"/></svg></span>
  <span class="app run"><svg viewBox="0 0 92 92"><rect width="92" height="92" rx="22" fill="#f3f5f8"/><circle cx="46" cy="46" r="40" fill="#3f9fe2"/><path d="M20 46l45-17-7 36-14-9-7 7-2-12z" fill="#fff"/><path d="M35 50l24-17-17 21" fill="#bcdaf0"/></svg></span>
  <span class="app"><svg viewBox="0 0 92 92"><rect width="92" height="92" rx="22" fill="#fff"/><g opacity="0.850"><rect x="34" y="6" width="24" height="38" rx="12" fill="#f59a2f"/><rect x="34" y="6" width="24" height="38" rx="12" fill="#f4d83c" transform="rotate(45 46 46)"/><rect x="34" y="6" width="24" height="38" rx="12" fill="#a9cf4a" transform="rotate(90 46 46)"/><rect x="34" y="6" width="24" height="38" rx="12" fill="#57b56c" transform="rotate(135 46 46)"/><rect x="34" y="6" width="24" height="38" rx="12" fill="#5aa4e2" transform="rotate(180 46 46)"/><rect x="34" y="6" width="24" height="38" rx="12" fill="#6478cc" transform="rotate(225 46 46)"/><rect x="34" y="6" width="24" height="38" rx="12" fill="#b277b8" transform="rotate(270 46 46)"/><rect x="34" y="6" width="24" height="38" rx="12" fill="#ea5a4a" transform="rotate(315 46 46)"/></g></svg></span>
  <span class="app run"><svg viewBox="0 0 92 92"><rect width="92" height="92" rx="22" fill="#5cc652"/><path d="M14 79l5-19a33 33 0 1 1 13 13z" fill="none" stroke="#fff" stroke-width="6" stroke-linejoin="round"/><g transform="translate(24 22) scale(1.900)"><path fill="#fff" d="M6.620 10.790c1.440 2.830 3.760 5.140 6.590 6.590l2.200-2.200c.270-.270.670-.360 1.020-.240 1.120.370 2.330.570 3.570.570.550 0 1 .450 1 1V20c0 .550-.450 1-1 1-9.390 0-17-7.610-17-17 0-.550.450-1 1-1h3.500c.550 0 1 .450 1 1 0 1.250.2 2.450.570 3.570.110.350.030.740-.250 1.020l-2.200 2.200z"/></g></svg><i class="badge">58</i></span>
  <span class="app"><svg viewBox="0 0 92 92"><rect width="92" height="92" rx="22" fill="#60cf55"/><rect x="13" y="26" width="46" height="41" rx="10" fill="#f3f6f2"/><path d="M61 42l14-13q3-1 3 2v32q0 3-3 2L61 53z" fill="#f3f6f2"/></svg></span>
  <span class="app"><svg viewBox="0 0 92 92"><rect width="92" height="92" rx="22" fill="#fbfbfa"/><g fill="none" stroke-width="2"><circle cx="18" cy="23" r="7" stroke="#2f6fe0"/><circle cx="18" cy="46" r="7" stroke="#dc4338"/><circle cx="18" cy="69" r="7" stroke="#ea9432"/></g><circle cx="18" cy="23" r="5" fill="#2f6fe0"/><circle cx="18" cy="46" r="5" fill="#dc4338"/><circle cx="18" cy="69" r="5" fill="#ea9432"/><path d="M34 23h48M34 46h48M34 69h48" stroke="#b5b5b5" stroke-width="2"/></svg></span>
  <span class="app"><svg viewBox="0 0 92 92"><rect width="92" height="92" rx="22" fill="#f7f6f4"/><path d="M0 25v-3Q0 0 22 0h48q22 0 22 22v3z" fill="#f7cd42"/><path d="M0 27h92M0 46h92M0 69h92" stroke="#c9c7c4" stroke-width="2"/></svg></span>
  <span class="app"><svg viewBox="0 0 92 92"><defs><linearGradient id="mu" x2="0" y2="1"><stop stop-color="#ec5f70"/><stop offset="1" stop-color="#e3303a"/></linearGradient></defs><rect width="92" height="92" rx="22" fill="url(#mu)"/><path d="M33 66V23l31-7v43" stroke="#fff" stroke-width="5" fill="none"/><path d="M33 21l31-7v12l-31 7z" fill="#fff"/><ellipse cx="27" cy="68" rx="9" ry="8" fill="#fff"/><ellipse cx="58" cy="61" rx="9" ry="8" fill="#fff"/></svg></span>
  <span class="app"><svg viewBox="0 0 92 92"><rect width="92" height="92" rx="22" fill="#a9aeb4"/><circle cx="46" cy="46" r="40" fill="#26272a"/><circle cx="46" cy="46" r="34" fill="none" stroke="#aaa" stroke-width="5" stroke-dasharray="3 2"/><circle cx="46" cy="46" r="26" fill="none" stroke="#a5a7ab" stroke-width="5"/><path d="M46 46h26M46 46L33 23M46 46L33 69" stroke="#a5a7ab" stroke-width="5"/><circle cx="46" cy="46" r="7" fill="#777"/></svg><i class="badge">1</i></span>
  <span class="app"><svg viewBox="0 0 92 92"><rect width="92" height="92" rx="22" fill="#1b1e1f"/><svg x="12" y="28" width="30" height="34" viewBox="0 0 24 24" color="#fff"><use href="#apple"/></svg><text x="42" y="61" font-size="38" font-weight="600" fill="#fff">tv</text></svg></span>
  <span class="app"><svg viewBox="0 0 92 92"><defs><linearGradient id="as" x2="0" y2="1"><stop stop-color="#4fb4f3"/><stop offset="1" stop-color="#2c60e0"/></linearGradient></defs><rect width="92" height="92" rx="22" fill="url(#as)"/><path d="M49 22L26 60M41 22l29 50M16 57h34M62 57h15M25 66l-4 7" stroke="#fff" stroke-width="8" stroke-linecap="round"/></svg><i class="badge">9</i></span>
  <span class="app"><svg viewBox="0 0 92 92"><rect width="92" height="92" rx="22" fill="#fff"/><path d="M13 81q12-8 7-18C8 42 20 14 46 11h33q-12 8-7 18c12 21 0 49-26 52z" fill="#e8793a"/><path d="M26 76C8 50 22 22 42 18M66 16c18 26 4 54-16 58" stroke="#fff" stroke-width="3" fill="none"/><circle cx="46" cy="46" r="18" fill="#4556d6" stroke="#fff" stroke-width="2"/><path d="M46 34l2 7 6-3-3 6 7 2-7 2 3 6-6-3-2 7-2-7-6 3 3-6-7-2 7-2-3-6 6 3z" fill="#fff"/></svg></span>
  <span class="app"><svg viewBox="0 0 92 92"><rect width="92" height="92" rx="22" fill="#b3b1b9"/><rect x="28" y="7" width="38" height="78" rx="8" fill="#111"/><rect x="31" y="10" width="32" height="72" rx="5" fill="#1c4a68"/><path d="M31 82V15q0-5 5-5h22q5 0 5 5v12Q36 50 35 82z" fill="#eec1ad"/><path d="M63 27Q40 42 33 82h6q2-32 24-44z" fill="#3f9aa0"/><rect x="40" y="11" width="12" height="4" rx="2" fill="#111"/></svg></span>
  <i class="dsep"></i>
  <span class="app run"><svg viewBox="0 0 92 92"><rect width="92" height="92" rx="22" fill="#f2f2f2"/><circle cx="46" cy="46" r="39" fill="#f3c23d"/><path d="M12 27a39 39 0 0 1 72 0H46L30 56z" fill="#db4a3c"/><path d="M12 27a39 39 0 0 0 34 58l17-29H29z" fill="#4ba552"/><circle cx="46" cy="46" r="19" fill="#fff"/><circle cx="46" cy="46" r="15" fill="#3b7de8"/></svg></span>
  <span class="app"><svg viewBox="0 0 92 92"><rect width="92" height="92" rx="22" fill="#efefef"/><rect x="7" y="7" width="78" height="78" rx="16" fill="#9ebdeb"/><path d="M7 50h78v19q0 16-16 16H23Q7 85 7 69z" fill="#2d4673"/><path d="M7 64q14-6 22 4t16 17H23Q7 85 7 69z" fill="#e9edf2"/><rect x="47" y="46" width="41" height="19" rx="7" fill="#16181a"/><path d="M51 65h33l9 26q0 6-5 6H46q-5 0-5-6z" fill="#c9ccd0" stroke="#83868a"/><path d="M57 68h21l5 16H52z" fill="#7b7f85"/></svg></span>
  <span class="app"><svg viewBox="0 0 92 92"><rect width="92" height="92" rx="22" fill="#d4d3d3"/><rect x="22" y="12" width="48" height="69" rx="8" fill="#26282a"/><rect x="28" y="18" width="36" height="16" rx="3" fill="#4b4d4f"/><g fill="#c9c9c9"><circle cx="33" cy="44" r="5"/><circle cx="46" cy="44" r="5"/><circle cx="33" cy="57" r="5"/><circle cx="46" cy="57" r="5"/><circle cx="33" cy="70" r="5"/><circle cx="46" cy="70" r="5"/></g><g fill="#f0952c"><circle cx="59" cy="44" r="5"/><circle cx="59" cy="57" r="5"/><circle cx="59" cy="70" r="5"/></g></svg></span>
  <span class="app"><svg viewBox="0 0 92 92"><rect width="92" height="92" rx="22" fill="#1d1e20"/><circle cx="46" cy="46" r="31" fill="#2f96ea" stroke="#c5ccd6" stroke-width="13"/><path d="M46 40q9 2 12 14l12 18 11-2v12H64Q42 62 38 48q1-7 8-8z" fill="#b4b9c2"/></svg></span>
  <i class="dsep"></i>
  <span class="app wide"><svg viewBox="0 0 96 104"><path d="M16 0h32l18 24v10H16z" fill="#f2f2f2"/><rect y="24" width="96" height="76" fill="#050505"/><path d="M0 41h96v42H0z" fill="#181b2a"/><path d="M44 42l20 24 4-8-18-18zM72 52l12-5-4 16zM14 72l10-5-4 12z" fill="#564c55"/></svg></span>
  <span class="app bin"><svg viewBox="0 0 82 106"><path d="M3 18h76l-9 78q-29 14-58 0z" fill="#87898c"/><path d="M10 24l8 72q8 6 16 6l-4-78z" fill="#a4a6a9"/><path d="M3 20q5-14 14-14l8-6 12 8 12-6 14 6q12 2 16 12-38 14-76 0z" fill="#dfe1e3"/><path d="M18 10l8 10M34 8l4 14 10-12M60 12l-8 10" stroke="#5a6470" stroke-width="3" fill="none"/></svg></span>
</footer>

<script src="chart.js"></script>
</body>
</html>
```
FILE: styles.css
```css
* {box-sizing:border-box;}
html {font-family:Inter, "Open Sans", "Liberation Sans", sans-serif;}
body {margin:0; height:100vh; min-height:1200px; display:flex; flex-direction:column; overflow:hidden; color:#dbdbdb; background:linear-gradient(90deg, #00002c 0, #00001e 22%, #8a1d1e 28%, #d03a2c 31%, #2a0d10 34%, #4e9c8c 38%, #2a5a58 45%, #060a4a 50%, #060a30 55%, #2f5a44 59%, #101010 63%, #0a0a18 72%, #2a0a68 77%, #a84fc8 82%, #42128c 86%, #00002c 94%);}
button {font:inherit; color:inherit; background:none; border:0; padding:0;}
a {color:inherit; text-decoration:none;}
i {font-style:normal;}
svg {display:block; flex:none;}
.sprite {position:absolute; width:0; height:0;}

/* menu bar */
.menubar {flex:none; height:48px; padding:0 38px 0 42px; display:flex; justify-content:space-between; align-items:center; font-size:25px; font-weight:500; color:#fff; background:linear-gradient(90deg, #440f80, #2c1183 42%, #221a72 66%, #3c2a60);}
.menus {display:flex; align-items:center; gap:42px;}
.apple {width:26px; height:30px;}
.status {display:flex; align-items:center;}
.gap-s {margin-left:10px;}
.gap-l {margin-left:33px;}
.gap-xl {margin-left:40px;}
.battery {font-size:23px;}
.clock {margin-left:30px;}

/* browser window */
.browser {flex:1; min-height:0; margin-top:2px; display:flex; flex-direction:column; overflow:hidden; border:2px solid #4a4a4a; border-top-color:#5c5c5c; border-radius:22px; background:#2e2e2e;}
.chrome {position:relative; flex:none; height:170px; border-bottom:2px solid #2a0306; color:#f03a2e;}
.theme {position:absolute; inset:0; width:100%; height:100%;}
.tabstrip {position:relative; display:flex; align-items:center; height:76px; padding:0 10px 0 40px;}
.lights {display:flex; gap:16px; width:143px; flex:none;}
.lights i {width:24px; height:24px; border-radius:50%;}
.lights .red {background:#ec6a5e;}
.lights .amber {background:#f4bf4f;}
.lights .green {background:#61c554;}
.tabs {display:flex; gap:14px; flex:0 1 2451px; min-width:0;}
.tab {position:relative; flex:1 1 0; min-width:0; height:56px; padding:0 14px 0 16px; display:flex; align-items:center; gap:16px; border-radius:20px; background:rgba(0,0,0,.62); font-size:24px; white-space:nowrap;}
.tab:after {content:""; position:absolute; right:-9px; top:12px; width:4px; height:32px; border-radius:2px; background:#000;}
.tab.active {background:none;}
.tab.active:after {display:none;}
.tab span {flex:1; min-width:0; overflow:hidden; -webkit-mask-image:linear-gradient(90deg, #000 60%, transparent); mask-image:linear-gradient(90deg, #000 60%, transparent);}
.tab span.short {flex:0 0 22px;}
.fav {width:32px; height:32px;}
.mark {width:24px; height:24px; margin-left:-6px;}
.active .mark {margin-left:-4px;}
.newtab {width:56px; height:56px; flex:none; margin-left:12px; border-radius:50%; background:#0c0c0c; display:flex; align-items:center; justify-content:center;}
.tabsearch {width:56px; height:56px; flex:none; margin-left:auto; border-radius:16px; background:#000; display:flex; align-items:center; justify-content:center;}
.navbar {position:relative; display:flex; align-items:center; height:94px; padding:4px 10px 0 28px;}
.navbtns {display:flex; gap:44px; flex:none; width:280px;}
.navbtns svg {width:28px; height:28px; fill:none; stroke:#b92a1e; stroke-width:3;}
.navbtns .dim {opacity:.5;}
.omnibox {flex:1 1 0; min-width:0; height:72px; padding:0 28px 0 8px; display:flex; align-items:center; gap:16px; border:4px solid #e98c80; border-radius:36px; background:#202224;}
.tune {width:48px; height:48px;}
.url {flex:1; min-width:0; margin:0; overflow:hidden; white-space:nowrap; font-size:28px; color:#9a9a9a;}
.url b {font-weight:400; color:#fff;}
.star {width:36px; height:36px;}
.exts {display:flex; gap:24px; margin-left:26px;}
.exts svg {width:48px; height:48px;}
.badged {position:relative;}
.badged i {position:absolute; right:-14px; bottom:-4px; width:38px; height:28px; border-radius:8px; background:#c74446; color:#fff; font-size:20px; font-weight:600; line-height:28px; text-align:center;}
.navsep {width:4px; height:32px; margin:0 36px 0 28px; border-radius:2px; background:#000;}
.music {width:32px; height:32px;}
.profile {width:66px; height:66px; margin-left:24px;}
.error {width:140px; height:68px; margin-left:10px; border-radius:34px; background:#202224; color:#fff; font-size:26px; display:flex; align-items:center; justify-content:center; gap:20px;}

/* chart application */
.tv {flex:1; min-height:0; display:flex; flex-direction:column; gap:8px; font-variant-numeric:tabular-nums;}
.ic {width:56px; height:56px; fill:none; stroke:currentColor; stroke-width:1;}
.chev {width:18px; height:18px;}
.topbar {flex:none; height:76px; padding-top:4px; display:flex; background:#0f0f0f; font-size:27px;}
.group {position:relative; display:flex; align-items:center; flex:none;}
.group:after {content:""; position:absolute; right:0; top:14px; width:2px; height:44px; background:#4a4a4a;}
.undo:after, .right:after {display:none;}
.symbol {width:388px; padding-left:22px;}
.avatar {position:relative; width:56px; height:56px; border-radius:50%; background:#6672a6; color:#fff; font-size:34px; font-weight:500; line-height:56px; text-align:center;}
.avatar i {position:absolute; left:32px; top:-10px; width:48px; height:36px; border:2px solid #0f0f0f; border-radius:18px; background:#e2464a; font-size:22px; line-height:32px;}
.glass {margin-left:47px;}
.symbol b {width:120px; margin-left:6px; overflow:hidden; white-space:nowrap; font-size:28px; font-weight:600;}
.symbol .ic {margin-left:28px;}
.intervals {width:548px; padding-left:14px;}
.intervals button {padding:0 12px;}
.intervals .chev {margin-left:16px;}
.on, .blue {color:#3f6cff;}
.style {width:94px; padding-left:18px;}
.indi {width:422px; padding-left:18px;}
.indi .label {width:126px; margin-left:4px; text-align:left;}
.indi .chev {margin:0 20px 0 32px;}
.dcircle {width:44px; height:44px; margin-left:16px; border:2px solid #555; border-radius:50%; font-size:20px; line-height:40px; text-align:center; color:#bbb;}
.alert {width:346px; padding-left:18px;}
.alert .label {margin-left:4px;}
.alert .replay {margin-left:32px;}
.undo {flex:1; padding-left:18px; gap:18px;}
.off {color:#4a4a4a;}
.layout {width:299px;}
.name {width:162px; margin:0 0 0 19px; line-height:30px; text-align:center; white-space:nowrap;}
.name a {display:block; font-size:20px; line-height:20px; color:#3f6cff;}
.layout .chev {margin-left:22px;}
.right {padding:0 6px 0 18px; gap:21px;}
.publish {width:142px; height:56px; margin-left:-3px; border-radius:24px; background:#f2f2f2; color:#0f0f0f; font-weight:500;}

.work {flex:1; min-height:0; display:flex; gap:8px;}
.tools {width:102px; flex:none; padding:15px 2px 0 0; display:flex; flex-direction:column; align-items:center; background:#0f0f0f; border-top-right-radius:8px;}
.tools > .ic {margin:8px 0;}
.tools hr, .side hr {width:72px; height:2px; margin:12px 0; border:0; background:#4a4a4a; flex:none;}
.side hr {width:66px; margin:9px 0;}
.fave {width:60px; height:60px; margin:auto 0 35px; border-radius:8px; background:#3a66f8; display:flex; align-items:center; justify-content:center;}
.side {width:88px; flex:none; padding-top:5px; display:flex; flex-direction:column; align-items:center; background:#0f0f0f; border-top-left-radius:8px;}
.side .ic {margin:18px 0;}
.side .fill {flex:1;}
.center {flex:1; min-width:0; display:flex; flex-direction:column; gap:8px;}
.chart {flex:1; min-height:0; display:flex; flex-direction:column; overflow:hidden; border-radius:8px; background:#0f0f0f;}
.plot {position:relative; flex:1; min-height:0; background:linear-gradient(#000, #0a0b10 50%, #161824);}
.canvas {width:100%; height:100%;}
.ranges {flex:none; height:78px; padding:0 20px 0 18px; display:flex; align-items:center; border-top:2px solid #333; font-size:27px;}
.ranges button {padding:0 12px;}
.sep {width:2px; height:44px; margin:0 14px 0 12px; background:#4a4a4a;}
.utc {margin-left:auto;}
.panel {flex:none; background:#0f0f0f; border-radius:8px 8px 0 0;}
.panel nav {height:78px; padding:0 10px 0 32px; display:flex; align-items:center; gap:66px; border-bottom:2px solid #333; font-size:27px;}
.panel .chev {margin:0 -16px 0 -42px;}
.winbtns {display:flex; gap:16px; margin-left:auto;}
.panel footer {height:42px; margin-top:15px; padding:0 20px 0 34px; display:flex; align-items:center; gap:34px; border-top:2px solid #4a4a4a; font-size:24px; color:#b8b8b8;}
.panel footer svg {margin-right:auto;}

/* over the plot */
.legend {position:absolute; left:12px; top:15px;}
.legend h1 {margin:0 0 12px 4px; height:38px; display:flex; align-items:center; font-size:31px; font-weight:400; font-variant-numeric:normal; color:#b4b2bb; white-space:nowrap;}
.legend h1 span {margin-left:6px;}
.legend .flag {margin:0 38px 0 16px;}
.trade {display:flex; align-items:center; margin-left:4px;}
.trade span {width:63px; text-align:center; font-size:22px;}
.trade button {width:155px; height:68px; border:2px solid; border-radius:12px; background:#0f0f0f; font-size:22px; line-height:24px;}
.trade b {display:block; font-size:25px; font-weight:600; line-height:30px;}
.trade .sell {color:#e2464a;}
.trade .buy {color:#3f6cff;}
.fold {width:58px; height:42px; margin-top:14px; border:2px solid #444; border-radius:8px; display:flex; align-items:center; justify-content:center;}
.currency {position:absolute; right:8px; top:10px;}
.currency select {width:128px; height:52px; padding:0 8px; border:2px solid #555; border-radius:10px; background:#0f0f0f; color:#dbdbdb; font:24px Inter, sans-serif; appearance:none; -webkit-appearance:none;}
.currency svg {position:absolute; right:9px; top:20px;}
.floating {position:absolute; height:76px; border-radius:12px; background:#1f1f1f; display:flex; align-items:center; gap:20px;}
.floating.back {right:306px; top:46px; width:1036px; padding:0 10px; justify-content:flex-end;}
.floating.back i {width:56px;}
.floating.front {right:546px; top:24px; width:796px; padding-left:16px; box-shadow:0 4px 8px rgba(0,0,0,.4);}
.grip {margin-right:6px;}
.paint {position:relative; height:76px;}
.paint .ic {margin-top:2px;}
.paint i {position:absolute; left:6px; top:54px; width:44px; height:8px; border-radius:4px; background:#3a66f8;}
.paint.none i {background:repeating-linear-gradient(90deg, #14184a 0 4px, #06061c 4px 8px);}
.px {width:120px; display:flex; align-items:center; gap:14px; padding-left:8px; font-size:27px;}
.px i {width:36px; height:4px; border-radius:2px; background:#dbdbdb;}

/* plot drawing */
.canvas text {font-size:24px; fill:#b3b3b5;}
.band {fill:#15204a;}
.zone {fill:none; stroke:#f79f36; stroke-width:2;}
.canvas .ob {font-size:28px; fill:#fff; text-anchor:middle;}
.trend {fill:none; stroke:#fde35a; stroke-width:4; stroke-linecap:round;}
.last {stroke:#e2464a; stroke-width:2; stroke-dasharray:2 4;}
.up {fill:#43947f;}
.down {fill:#e2464a;}
.measure {fill:none; stroke:#3f6cff; stroke-width:4;}
.measure circle {fill:#0a0b12; stroke-width:3;}
.tip rect {fill:#2e2e2e;}
.canvas .tip text {fill:#fff; text-anchor:middle;}
.event {fill:none; stroke:#a94dc0; stroke-width:3;}
.event path {fill:#a94dc0; stroke:none;}
.brand {color:#dbdbdb;}
.canvas .brand text {font-size:40px; font-weight:700; fill:#dbdbdb; stroke:#0f0f0f; stroke-width:8px; paint-order:stroke;}
.canvas .tag text {fill:#fff;}
.canvas .tag .dim {fill:#f6c6c6;}
.canvas .day {font-weight:700;}
.canvas .mid {text-anchor:middle;}
.axisicon {fill:none; stroke:#dbdbdb; stroke-width:2;}

/* dock */
.dock {flex:none; height:144px; margin:3px 105px 10px; padding:0 24px 8px 18px; display:flex; align-items:center; justify-content:space-between; border:2px solid #4a3f68; border-radius:46px; background:linear-gradient(90deg, #15122e 0, #17122e 14%, #3a1424 19%, #651c1f 25%, #3a2a2b 29%, #2c5850 33%, #256058 37%, #1c2c50 43%, #18203a 48%, #1b1a25 53%, #25331f 57%, #251a20 63%, #1c1030 69%, #43147a 75%, #7a2590 81%, #6e2a86 84%, #3a1455 89%, #22103c);}
.app {position:relative; width:92px; height:92px;}
.app > svg {width:92px; overflow:visible;}
.app.wide, .wide > svg {width:96px;}
.app.bin, .bin > svg {width:82px;}
.wide > svg, .bin > svg {margin-top:-10px;}
.run:after {content:""; position:absolute; left:42px; bottom:-27px; width:8px; height:8px; border-radius:50%; background:#a99bd0;}
.badge {position:absolute; right:-16px; top:-11px; width:44px; height:44px; border-radius:50%; background:#dc4a3d; color:#fff; font-size:23px; line-height:44px; text-align:center;}
.dsep {width:1px; height:108px; margin:0 12px; background:#8a76a8;}
```
FILE: chart.js
```js
var NS = "http://www.w3.org/2000/svg";

// direction, high, body top, body bottom, low
var nightUnit = 2.063;
var night = [
  "d 673 708 763 819", "d 732 761 829 924", "d 811 827 897 957", "u 689 706 897 910", "u 623 685 708 759",
  "d 664 685 893 902", "u 699 708 893 893", "d 693 708 790 807", "u 691 706 790 858", "u 582 594 708 710",
  "u 491 557 596 629", "d 534 557 625 644", "u 518 536 625 631", "d 518 536 561 588", "d 545 559 642 652",
  "d 592 640 673 687", "d 611 671 685 691", "d 666 683 757 765", "u 675 704 757 761", "d 699 704 902 904",
  "u 829 838 902 916", "d 780 838 902 951", "u 844 895 899 1007", "d 873 897 1034 1065", "u 972 990 1034 1067",
  "u 924 976 992 1063", "u 879 947 978 1009", "d 906 947 992 1019", "d 963 990 1003 1042", "d 922 1001 1019 1034",
  "d 1011 1017 1248 1271", "d 1230 1246 1417 1434", "d 1339 1415 1469 1527", "u 1364 1409 1469 1539", "d 1341 1407 1411 1428",
  "u 1318 1376 1413 1457", "d 1339 1376 1401 1422", "u 1228 1312 1401 1407", "u 1104 1147 1314 1320", "u 1025 1069 1149 1193",
  "d 1036 1069 1153 1165", "d 1091 1151 1184 1184", "u 1131 1155 1184 1265", "u 1048 1071 1157 1170", "d 1034 1071 1147 1164",
  "u 982 994 1147 1176", "u 864 941 997 1001", "u 873 912 943 970", "d 887 912 994 1032", "u 902 963 994 1011",
  "d 941 963 974 1011", "d 963 972 1075 1085", "u 1040 1056 1075 1112", "u 1007 1044 1058 1118", "u 885 897 1046 1073",
  "d 844 897 1005 1011", "u 850 918 1005 1050", "d 906 918 943 984", "d 926 941 1019 1034", "d 941 1017 1195 1248",
  "u 673 701 1195 1250", "u 336 446 704 790", "d 101 446 745 809", "u 256 631 745 796", "u 452 557 633 685",
  "d 489 557 823 823", "u 640 772 823 881", "u 545 576 774 774", "d 567 576 677 679", "d 668 675 718 763",
  "u 685 708 718 856", "d 654 708 798 819", "d 796 796 900 926", "u 689 724 900 900", "u 644 654 726 757",
  "u 574 578 656 714", "u 518 551 580 668", "d 520 551 605 629", "d 485 602 644 656", "u 534 594 644 668",
  "d 569 594 677 720", "d 557 675 708 726", "d 623 706 718 734", "d 582 716 751 753", "d 679 747 751 776"
];
var dayUnit = 2.376;
var day = [
  "u 751 836 865 870", "u 725 725 839 839", "u 622 627 727 727", "d 618 627 665 698", "u 620 622 665 727",
  "d 594 622 663 696", "u 641 651 663 696", "u 506 594 653 653", "u 485 504 596 608", "u 447 454 506 506",
  "u 416 423 456 485", "u 356 418 423 461", "d 387 421 468 480", "u 435 444 468 494", "d 435 444 577 587",
  "d 549 575 611 630", "u 527 527 611 630", "d 506 527 568 570", "d 535 563 568 627", "d 565 568 651 651",
  "u 580 599 651 708", "u 461 475 601 646", "u 276 311 478 494", "u 219 268 314 368", "u 204 254 271 314",
  "d 242 254 304 304", "d 302 302 356 366", "d 342 354 425 435", "u 380 418 425 440", "u 366 371 421 451",
  "d 361 371 447 451", "u 413 432 447 470", "u 390 394 435 444", "u 342 349 397 418", "u 309 340 352 385",
  "u 328 337 342 387", "d 337 340 456 485", "d 444 454 506 520", "u 449 485 506 511", "u 437 442 487 492",
  "d 442 442 535 542", "d 520 532 556 563", "u 518 520 556 582", "d 513 520 544 558", "u 518 530 544 599",
  "u 478 513 532 556", "d 516 516 539 558", "u 516 532 537 589", "d 525 535 639 639", "d 601 637 668 668",
  "u 596 596 668 668", "d 596 596 613 653", "d 594 611 625 651", "d 622 622 679 679", "u 611 618 679 684",
  "d 601 618 675 677", "d 634 670 675 694", "u 634 649 675 682", "u 606 632 651 668", "d 613 632 651 663",
  "u 582 611 651 658", "u 561 563 613 637", "u 456 506 565 568", "u 390 413 508 508", "d 380 411 416 454",
  "d 413 416 442 468", "d 413 440 489 516", "u 435 449 489 506", "u 316 397 451 468", "u 340 368 399 432",
  "d 321 368 468 561", "u 406 435 468 525", "u 344 418 437 475", "d 366 418 546 558", "d 508 544 625 630",
  "d 592 622 779 782", "d 684 777 813 848", "d 755 810 848 851", "u 729 751 848 848", "d 727 751 774 829",
  "d 763 772 848 848", "d 846 846 865 936", "d 836 862 1010 1043", "d 929 1007 1036 1050", "d 1000 1033 1138 1174",
  "d 1083 1136 1183 1186"
];

function add(parent, name, attrs, text) {
  var el = document.createElementNS(NS, name);
  for (var k in attrs) el.setAttribute(k, attrs[k]);
  if (text) el.textContent = text;
  parent.appendChild(el);
  return el;
}

var candles = document.getElementById("candles");
var index = 0;

function draw(list, unit) {
  list.forEach(function (row) {
    var p = row.split(" ");
    var y = p.slice(1).map(function (v) { return Math.round(560 + v / unit); });
    var x = Math.round(112.800 + index * 9.190);
    add(candles, "path", {
      "class": p[0] === "u" ? "up" : "down",
      d: "M" + (x - 1) + " " + y[0] + "h2V" + y[3] + "h-2z" +
         "M" + (x - 4) + " " + y[1] + "h8V" + Math.max(y[2], y[1] + 2) + "h-8z"
    });
    index++;
  });
}
draw(night, nightUnit);
draw(day, dayUnit);

// price levels next to the last move
var levels = document.getElementById("levels");
[
  [599, "81,304.1", "#e2464a"], [667, "80,619.9", "#ffffff"], [723, "80,059.8", "#ffffff"],
  [809, "79,208.8", "#62ad59"], [955, "77,776.2", "#62ad59"], [1078, "76,600.3", "#62ad59"],
  [1214, "75,317.4", "#81c784"]
].forEach(function (l) {
  add(levels, "path", {d: "M1574 " + l[0] + "h250", stroke: l[2], "stroke-width": 2});
  add(levels, "text", {x: 1845, y: l[0] + 9, style: "fill:" + l[2]}, "(" + l[1] + ")");
});

// price scale
var axes = document.getElementById("axes");
[
  [432, "83,000.0"], [528, "82,000.0"], [727, "80,000.0"], [808, "79,200.0"], [890, "78,400.0"],
  [970, "77,600.0"], [1113, "76,250.0"], [1177, "75,650.0"], [1241, "75,050.0"], [1305, "74,450.0"]
].forEach(function (p) {
  add(axes, "text", {x: 2656, y: p[0] + 9}, p[1]);
});
[
  [534, 34, "81,788.7", "#e2464a"], [610, 34, "81,023.1", "#808080"], [679, 34, "80,329.1", "#3a66f8"],
  [972, 34, "77,159.4", "#43947f"], [1006, 34, "76,809.0", "#3a66f8"], [1040, 62, "76,795.7", "#e2464a"]
].forEach(function (t) {
  var g = add(axes, "g", {"class": "tag"});
  add(g, "rect", {x: 2640, y: t[0], width: 132, height: t[1], rx: 3, fill: t[3]});
  add(g, "text", {x: 2656, y: t[0] + 24}, t[2]);
  if (t[1] > 34) add(g, "text", {x: 2656, y: t[0] + 52, "class": "dim"}, "03:45");
});

// time scale, one label every three hours; the crosshair label covers the two empty ones
"06:00 09:00 12:00 15:00 18:00 21:00 8 03:00 06:00 09:00 12:00 15:00 18:00 21:00 9 03:00 06:00 09:00 12:00 - - 21:00 10"
  .split(" ").forEach(function (t, i) {
    if (t === "-") return;
    add(axes, "text", {x: Math.round(122 + i * 110.300), y: 1402, "class": t.length < 3 ? "mid day" : "mid"}, t);
  });
var now = add(axes, "g", {"class": "tag"});
add(now, "rect", {x: 2139, y: 1364, width: 302, height: 48, rx: 3, fill: "#3a66f8"});
add(now, "text", {x: 2157, y: 1402}, "Wed 09 Apr '25");
add(now, "text", {x: 2356, y: 1402}, "17:00");
```
